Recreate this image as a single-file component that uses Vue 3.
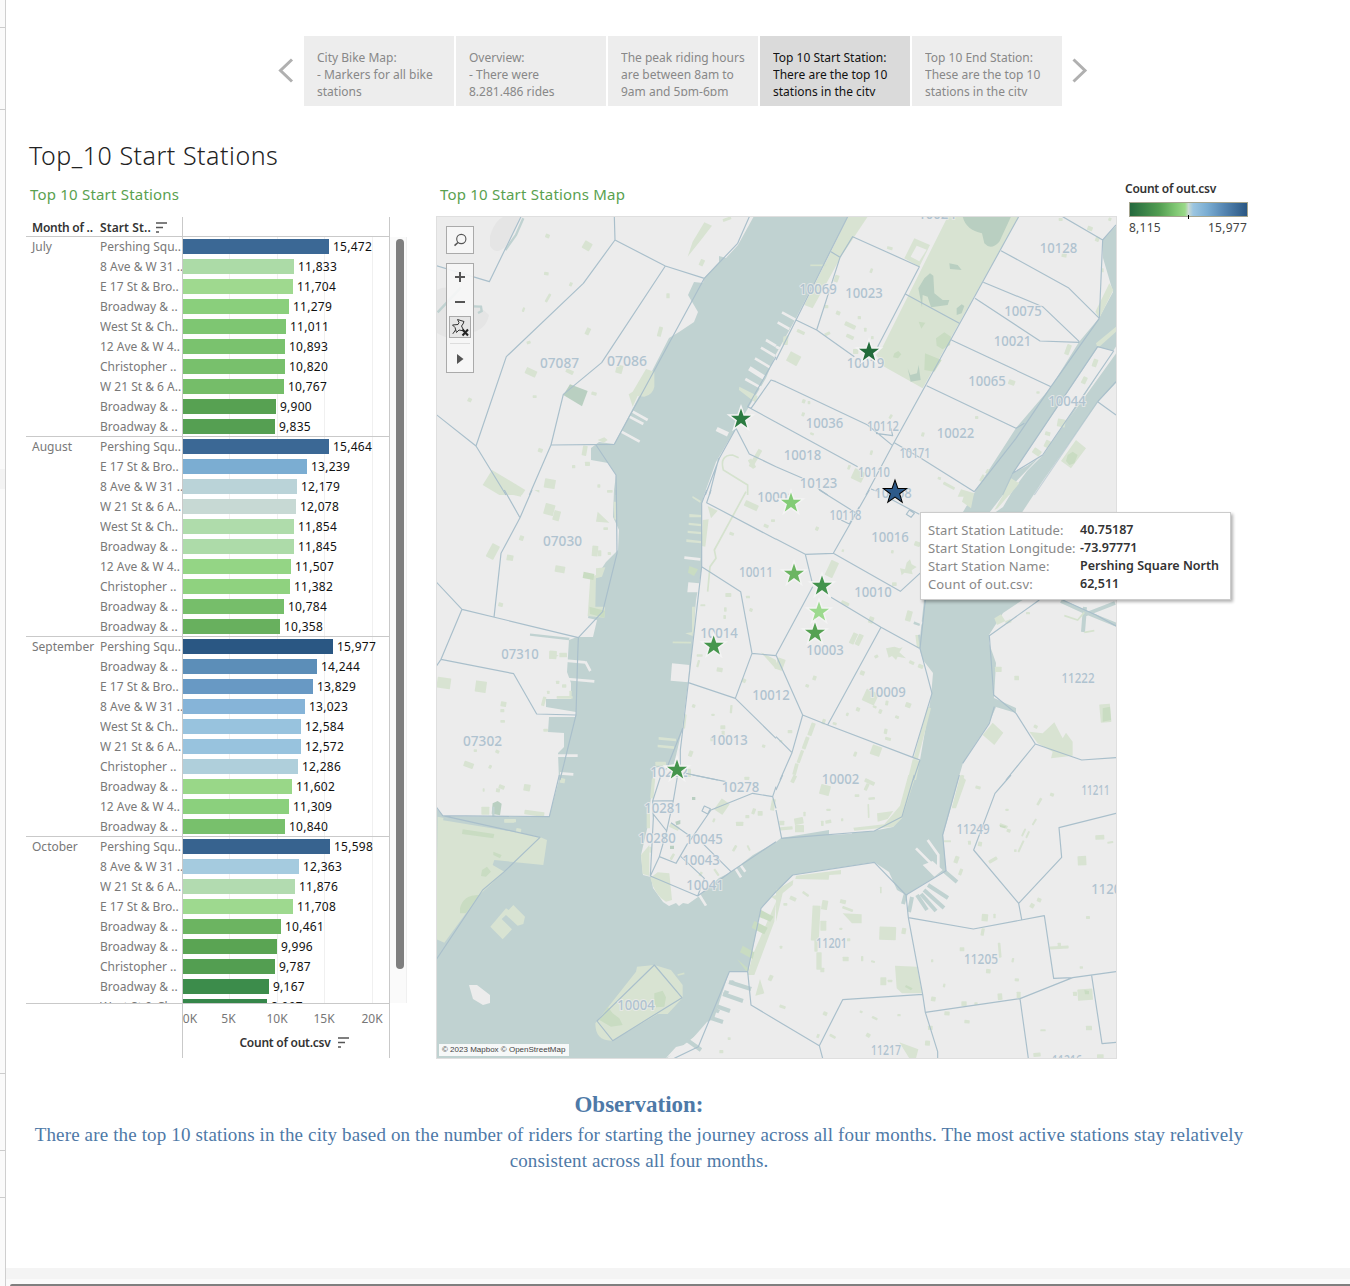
<script setup>
const stories = [
  ['City Bike Map:', '- Markers for all bike', 'stations'],
  ['Overview:', '- There were', '8.281.486 rides'],
  ['The peak riding hours', 'are between 8am to', '9am and 5pm-6pm'],
  ['Top 10 Start Station:', 'There are the top 10', 'stations in the city'],
  ['Top 10 End Station:', 'These are the top 10', 'stations in the city'],
]
const activeStory = 3

const P = 'Pershing Squ..', A8 = '8 Ave & W 31 ..', E17 = 'E 17 St & Bro..', B = 'Broadway & ..'
const WS = 'West St & Ch..', A12 = '12 Ave & W 4..', C = 'Christopher ..', W21 = 'W 21 St & 6 A..'
const months = [
  { name: 'July', rows: [[P, 15472, '#3b6895'], [A8, 11833, '#acdba7'], [E17, 11704, '#9fd98f'], [B, 11279, '#8acf7c'], [WS, 11011, '#7ec672'], [A12, 10893, '#7ac26e'], [C, 10820, '#78c06c'], [W21, 10767, '#75bd69'], [B, 9900, '#57a152'], [B, 9835, '#559f52']] },
  { name: 'August', rows: [[P, 15464, '#3b6895'], [E17, 13239, '#7badd2'], [A8, 12179, '#bad3d8'], [W21, 12078, '#c7d9d4'], [WS, 11854, '#afdcab'], [B, 11845, '#addba9'], [A12, 11507, '#94d585'], [C, 11382, '#8fd27f'], [B, 10784, '#76be6a'], [B, 10358, '#68b05e']] },
  { name: 'September', rows: [[P, 15977, '#2a5783'], [B, 14244, '#5c8eb8'], [E17, 13829, '#6899c4'], [A8, 13023, '#86b4d8'], [WS, 12584, '#98c3de'], [W21, 12572, '#98c3de'], [C, 12286, '#afcfdb'], [B, 11602, '#99d788'], [A12, 11309, '#8bd07d'], [B, 10840, '#78c06c']] },
  { name: 'October', rows: [[P, 15598, '#37638f'], [A8, 12363, '#a5cbdf'], [W21, 11876, '#b2dbb0'], [E17, 11708, '#9ed98f'], [B, 10461, '#6cb461'], [B, 9996, '#5aa453'], [C, 9787, '#539e51'], [B, 9167, '#3c8c4b'], [WS, 8997, '#35864a']] },
]
const barWidth = v => Math.floor(v * 0.0095 + 0.215) - 1

const tips = [
  ['Start Station Latitude:', '40.75187'],
  ['Start Station Longitude:', '-73.97771'],
  ['Start Station Name:', 'Pershing Square North'],
  ['Count of out.csv:', '62,511'],
]

// Map sections: each holds its own origin and is drawn at three units per pixel.
const tiles = [
  { x: 436, y: 215,
    lines: 'M255,5L160,200L0,152M535,5L537,75L442,205L211,425L120,693L0,598M120,693L210,840M537,75L688,153L805,190M688,153L497,443L382,538L345,690L535,688M345,690L280,840M940,5L905,85L805,190L535,688M480,690L540,780L541,840M1020,425L935,575L945,580L1005,495L1020,500M935,575L1020,622M900,640L940,717L1020,755M900,640L850,730L808,840M848,730L820,840',
    piers: 'M990,375l30,18M975,398l42,25M957,430l50,30M928,492l50,28M590,590l45,25M580,605l42,22M556,650l55,30', wide: 'M940,460l45,28M842,642l34,16',
    parks: [[328, 57, 13, 12, 20], [441, 80, 25, 25, 30], [324, 171, 14, 10, 8], [400, 202, 9, 12, 25], [332, 235, 8, 28, 30], [259, 277, 7, 14, 20], [272, 378, 12, 9, -20], [449, 338, 13, 22, 25], [691, 235, 10, 15, 0], [666, 335, 12, 30, 15], [268, 462, 34, 20, 25], [389, 464, 24, 12, 25], [540, 450, 20, 25, 15], [466, 531, 16, 10, 15], [95, 549, 12, 12, 25], [290, 541, 12, 8, 0], [306, 700, 14, 12, 20], [439, 692, 14, 30, 10], [447, 740, 15, 13, 0], [408, 750, 10, 10, 0], [325, 792, 33, 28, 10], [484, 808, 9, 10, 0], [513, 825, 17, 8, 0], [791, 133, 13, 20, 25], [860, 8, 26, 9, -20], [952, 700, 13, 60, 30], [933, 740, 30, 12, 60]],
    greens: 'M805,22L828,32L795,75L755,125L770,80ZM630,462L655,470L655,515Q650,540 625,545L605,543L590,575L578,538L590,530ZM168,765L268,825L258,840L190,840L140,810ZM910,515l55,28-6,20-50,-38ZM485,675l20,-8 10,8-12,8Z',
    darks: 'M402,508L455,528L438,574L382,540Z', routes: 'M935,840V810L862,765Q850,720 890,720L908,728', creek: 'M262,10L240,60L208,105M5,292L75,217M112,274L135,275L137,288L126,294' },
  { x: 776, y: 215,
    lines: 'M215,5L60,315L0,435M165,110L192,127L230,65L430,155L305,395M192,127L122,345M60,315L122,345L235,425M388,237L550,325M728,5L350,690L270,840M860,5L980,75L970,310M980,75L1020,30M675,107L877,218L970,310M622,202L800,275L910,380M597,250L792,378L910,382M526,375L825,515M452,512L720,640L745,625M0,500L275,630L350,692M0,622L245,755M0,755L80,790M125,820L155,840M355,683L435,730L595,830M970,310L825,515L720,670L595,830M965,395L1013,408L800,720L710,775ZM965,560L1020,600M965,560L1020,500M285,822L310,832M300,655L350,662L345,640',
    piers: 'M18,292l40,22M5,322l35,20M0,395l22,10', minor: 'M710,775L680,840M965,560L775,840',
    parks: [[333, 95, 17, 9, 15], [282, 160, 8, 14, 20], [175, 180, 13, 22, 20], [180, 288, 13, 12, 20], [145, 270, 12, 10, 0], [62, 346, 25, 10, 25], [205, 325, 35, 13, 25], [210, 360, 24, 11, 25], [145, 352, 18, 9, -25], [35, 415, 36, 32, 28], [245, 303, 10, 10, 0], [264, 338, 8, 12, 0], [285, 363, 8, 10, 0], [231, 402, 16, 15, 0], [78, 553, 10, 12, 20], [95, 558, 8, 10, 0], [77, 592, 9, 12, 20], [102, 653, 12, 7, 20], [340, 598, 8, 14, 30], [436, 652, 9, 13, 15], [282, 706, 8, 14, 15], [597, 603, 10, 9, 0], [485, 786, 10, 8, 15], [500, 808, 38, 9, 28], [934, 34, 16, 13, 20], [848, 9, 12, 9, 0], [857, 115, 15, 12, 10], [958, 65, 12, 15, 20], [697, 495, 20, 15, 20], [781, 529, 10, 7, 0], [869, 388, 14, 32, 20], [807, 650, 16, 12, 15], [806, 676, 16, 22, 25], [770, 702, 25, 18, 35], [844, 612, 24, 24, 10], [918, 485, 14, 22, 25], [950, 432, 14, 24, 20], [975, 160, 8, 12, 0], [997, 8, 9, 10, 20], [229, 765, 35, 33, 25], [215, 750, 8, 14, 20], [645, 117, 14, 12, 30], [614, 778, 8, 22, 30], [630, 762, 7, 14, 30]],
    greens: 'M215,5L275,5L195,125L110,280L85,270L165,110ZM515,5H728L440,520L325,455L300,420L320,395ZM415,70L462,90L430,155L385,130ZM1000,205L1012,225L970,310L958,290ZM900,675L930,700L885,760L855,738ZM1020,335L1020,350L965,400L960,385ZM555,823l40,12-5,10H545ZM705,790L730,805L700,840H680ZM22,365L38,360L35,390L20,390Z',
    darks: 'M560,5H705L670,80Q645,108 625,85L618,55Q570,45 560,5ZM462,175L472,182L475,235L500,255L520,255L515,270L465,277L455,245L440,240L438,277L427,220L445,190ZM520,145l25,5 12,15-35,-3ZM542,280l15,-12 8,5-8,22-15,5ZM395,460l8,20 20,-5 5,-25 6,45-30,5Z',
    mids: 'M480,370L505,352L525,365L522,390L500,403L482,392ZM447,415L497,435L475,470L445,465ZM355,415l12,-7 9,10-10,12-15,-3ZM428,320l20,3-12,18ZM875,720l15,-10 15,10-10,25-15,5-10,-12Z', holes: 'M422,92l30,12-22,35-26,-14Z', routes: 'M103,151H152' },
  { x: 436, y: 490,
    lines: 'M205,0L252,83L288,0M252,83L195,190L174,382M0,275L78,358L427,443L500,365L543,190L541,0M78,358L15,508L0,530M15,508L233,551L302,672L420,675M427,443L425,500L420,675L372,870M825,0L812,38L1020,148M812,0L797,40V230L914,305L948,490L898,625L757,578M898,625L1020,745M948,490L1020,497M797,230L757,578L733,780V840M740,715L690,840M750,850L845,870',
    piers: 'M745,203L793,208M390,512l58,5M448,515l15,28M393,567L475,574M365,797h60M372,850l40,3',
    parks: [[325, 42, 30, 33, 15], [352, 62, 20, 30, 15], [250, 137, 13, 15, 20], [158, 162, 25, 45, 28], [212, 195, 20, 17, 10], [357, 228, 30, 20, 10], [468, 167, 18, 32, 5], [486, 181, 10, 18, 0], [187, 338, 14, 12, 15], [340, 482, 22, 25, 5], [370, 488, 23, 14, 0], [3, 563, 41, 32, 8], [118, 573, 33, 34, 8], [194, 635, 17, 15, 10], [193, 657, 12, 10, 0], [193, 690, 14, 8, 0], [83, 816, 30, 17, 20], [113, 778, 10, 8, 0], [178, 780, 12, 10, 25], [158, 825, 9, 11, 25], [322, 716, 14, 9, 0], [360, 572, 10, 10, 0], [378, 583, 13, 10, 0], [333, 602, 8, 10, 0], [318, 620, 10, 28, 15], [362, 618, 48, 8, 0], [400, 602, 7, 20, 0], [502, 112, 14, 8, 0], [515, 186, 10, 9, 0], [925, 38, 42, 18, 25], [983, 103, 15, 10, 25], [1005, 88, 12, 8, 0], [880, 127, 14, 9, 20], [868, 309, 18, 12, 0], [864, 352, 8, 13, 0], [862, 375, 8, 12, 0], [940, 355, 10, 10, 20], [930, 317, 12, 8, 0], [793, 343, 15, 6, 0], [842, 533, 18, 13, 10], [782, 493, 18, 7, 0], [783, 510, 7, 22, 15], [882, 645, 7, 25, 5], [768, 643, 10, 10, 20], [826, 671, 10, 7, 0], [853, 706, 15, 12, 0], [857, 722, 9, 14, 0], [823, 742, 9, 12, 0], [978, 764, 10, 9, 20], [758, 782, 12, 18, 20], [918, 566, 12, 12, 25], [755, 836, 10, 25, 0], [658, 815, 32, 12, 0], [925, 860, 15, 10, 0]],
    greens: 'M485,65L520,98L480,95ZM815,48L845,62L825,85ZM800,90L818,88L808,170L797,168ZM463,260L480,255L478,350H507L505,383L455,378ZM480,235l28,-3-10,28-18,5ZM975,487L1020,510V538ZM760,72L797,75V82H760ZM758,98l38,4v7l-38,-4ZM755,122l42,4v7l-42,-4ZM751,148l44,5v7l-44,-4ZM770,18l25,15-3,5-23,-15ZM533,35h10v55l-8,-2ZM748,430l22,-4v12ZM768,350h9l-3,80h-6ZM745,672l7,2-5,42-8,-2ZM168,0H260L255,20ZM295,0h15v8ZM668,741l52,5v8l-52,-5ZM665,764l50,5v8l-50,-5ZM340,482l28,15-28,10Z',
    mids: 'M443,245L475,252L472,270L440,264ZM460,350L507,362L505,383L462,372ZM760,228l26,10-12,20-18,-10Z',
    holes: 'M757,277L790,280V307H754ZM708,520L760,525L757,577L704,572Z', routes: 'M930,5L835,180L840,205L822,230L815,305M710,457L765,458', creek: 'M282,434L400,447' },
  { x: 776, y: 490,
    lines: 'M130,0L245,72M280,0L172,190L88,193L0,147M88,193L108,275M172,190L373,304L435,247M110,290L0,495M165,322L315,412L430,475M315,412L155,705M0,495L80,675L155,705L410,802L432,810M80,675L48,788L12,870M48,788L0,740M410,802L468,610L432,475L448,330M790,330L640,437L653,615L720,670L778,762L917,810L1020,803M778,762L690,870M655,650L640,700L560,820M195,90L220,102L250,50M340,25L430,73M400,60l15,10-10,12-14,-9ZM432,810L412,870M860,330L960,375L1020,408', piers: 'M415,390l24,10',
    parks: [[118, 110, 10, 12, 25], [155, 212, 25, 50, 25], [197, 178, 7, 8, 20], [345, 180, 8, 10, 10], [415, 155, 18, 14, 20], [348, 277, 14, 11, 0], [195, 335, 25, 10, 25], [278, 380, 15, 20, 20], [390, 362, 17, 32, 15], [225, 428, 15, 35, 25], [242, 432, 15, 35, 25], [0, 505, 24, 35, 20], [110, 557, 11, 14, 20], [252, 542, 14, 14, 20], [88, 583, 11, 9, 20], [295, 495, 12, 9, -25], [399, 513, 16, 10, 25], [426, 523, 16, 12, 20], [263, 602, 40, 38, 25], [240, 652, 12, 12, 20], [308, 658, 10, 13, 20], [210, 668, 8, 10, 20], [290, 647, 12, 7, 20], [357, 677, 12, 9, 20], [388, 638, 17, 15, 20], [328, 632, 9, 14, 10], [324, 716, 10, 16, 10], [327, 742, 18, 9, 15], [285, 767, 30, 30, 20], [233, 785, 9, 15, 20], [35, 720, 14, 10, 0], [170, 697, 12, 8, 20], [138, 687, 10, 16, 20], [100, 698, 13, 40, 20], [83, 740, 12, 38, 20], [68, 780, 10, 40, 20], [53, 820, 11, 35, 15], [715, 557, 14, 14, 0], [657, 530, 20, 16, 0], [750, 366, 12, 7, 0], [688, 390, 18, 10, -20], [773, 705, 12, 10, 25], [972, 642, 32, 55, -5], [10, 750, 9, 7, 0], [553, 855, 10, 16, 20]],
    greens: 'M372,235l15,3 5,-20 10,-10 5,15 15,8-15,10 3,12-25,-5-8,8ZM655,60L690,0H712L665,55ZM558,35l10,-30 25,10-8,40ZM650,698L682,728L655,765L620,735ZM760,725L800,730L835,697L860,745L870,728L890,755V797L825,805L830,785L785,760ZM455,650L465,655L425,810L412,808ZM410,808L432,812L420,870H395ZM655,385l20,-12 13,20-25,12ZM418,435l8,0 5,35-8,5ZM330,475l25,-5 15,5 10,-3-10,15 20,18-25,-5-5,10-12,-12-10,5Z',
    mids: 'M980,655l22,-5 3,40-25,5Z', routes: 'M865,377L905,390L925,367M925,427L955,422' },
  { x: 436, y: 775,
    lines: 'M0,95L20,122L340,125L370,0M20,122L312,187L205,290L140,345L0,555M725,0L712,77L650,78L675,0M650,78L652,130L643,303L785,363L885,290L1020,200M650,115L692,168L712,77M692,168L670,245L720,265L755,205M705,143L765,185M643,303L670,245M735,245L805,310L785,363M800,205L885,290M760,200L825,105L950,55L1010,65L1020,100M1010,65L1020,35M805,93l18,8-8,16-17,-9ZM770,0L870,20M1020,350L975,400L935,590L880,590L787,815L715,850M935,590L945,690L1020,735M655,570L738,668L530,797L483,738Z',
    piers: 'M895,275l20,32M910,265l18,25M790,360l20,32',
    parks: [[180, 40, 12, 12, 10], [188, 30, 18, 12, 20], [263, 28, 20, 20, 10], [136, 95, 24, 24, 0], [265, 108, 60, 14, 8], [205, 132, 35, 10, 0], [140, 40, 6, 10, 0], [240, 160, 15, 16, 10], [372, 10, 15, 14, 10], [843, 75, 30, 40, 35], [1005, 72, 12, 35, 10], [900, 140, 22, 13, 0], [948, 100, 10, 18, 20], [965, 108, 15, 14, 0], [928, 120, 12, 10, 0], [830, 130, 7, 12, 20], [892, 210, 8, 20, 30], [935, 210, 6, 18, -25], [790, 290, 8, 14, 30], [838, 280, 7, 24, -35], [705, 235, 8, 20, 30], [700, 150, 30, 12, 25], [645, 10, 10, 60, 5], [632, 100, 10, 60, 0], [640, 215, 8, 18, 0], [850, 825, 12, 10, 0], [875, 787, 9, 8, 0], [998, 600, 12, 18, 25]],
    greens: 'M5,125L310,185L333,195L322,270L175,255L170,270L205,290L130,360L25,503L0,492ZM163,455L210,400L218,405L232,390L267,425L262,447L245,452L210,420L197,432L228,463L200,493ZM603,575L655,570L705,585L740,630V668L695,717H665L530,797Q478,800 478,745L600,590ZM643,308L665,292L700,295L708,375L690,380Q655,360 643,308ZM615,240L640,210V303L620,297ZM972,612L985,655L958,662ZM1020,360V375L1005,365ZM1020,380L1015,440L955,600H935L950,540ZM205,133h30v10h-30Z',
    mids: 'M80,163L175,177L172,190L78,177ZM72,400Q80,360 130,360L90,415H72ZM138,285l15,-10 12,15-15,15-15,-2ZM172,230l25,10-5,10-20,-10ZM655,655l25,-8 10,20-5,28-25,2-5,-20ZM975,405l38,20-10,15-35,-15ZM955,438l40,20-10,20-38,-20ZM920,512l35,20-5,20-38,-20ZM903,552l35,30-3,12ZM490,735l25,-40 15,20 20,15 10,20-35,5Z',
    darks: 'M170,85l15,-7 12,8-5,35-25,-5ZM718,140l15,-5v12l-12,4ZM702,212h12v10h-12ZM768,66h10v9h-10Z',
    routes: 'M725,600L745,595', creek: 'M22,132L240,168M172,95V125L205,130' },
  { x: 776, y: 775,
    lines: 'M0,45L20,0M0,105L17,190L295,168L378,125L415,0M50,300L295,262L390,360L510,287L500,180L550,0M50,300L0,350M390,360L397,428L440,658L448,712L485,830V850M397,428L592,462L805,422L833,610L890,608L1020,590M705,0L657,55L593,225L728,385L737,433M728,385L857,247L849,158L1020,115M448,712L732,671L890,608M732,671L757,850M947,602L978,806L1020,802M440,658L200,674L130,812L0,735M130,812L140,850',
    piers: 'M455,195L487,240V280M420,220L465,265',
    parks: [[132, 30, 30, 30, 15], [47, 0, 12, 24, 25], [265, 15, 32, 12, 25], [267, 25, 10, 22, 25], [275, 87, 5, 42, -2], [236, 58, 14, 8, 0], [277, 67, 20, 7, -5], [82, 110, 7, 14, 0], [10, 137, 15, 14, 0], [55, 128, 27, 20, -10], [57, 150, 27, 22, 0], [135, 137, 8, 16, 0], [148, 135, 18, 10, -10], [195, 130, 7, 9, 0], [10, 155, 40, 10, -5], [151, 101, 13, 7, 0], [598, 33, 16, 9, 15], [688, 101, 10, 7, 0], [670, 148, 25, 10, 20], [692, 162, 12, 10, 20], [786, 68, 8, 24, 30], [822, 54, 12, 10, 20], [772, 130, 6, 22, 30], [740, 160, 6, 25, 25], [752, 168, 6, 22, 25], [732, 195, 6, 38, 25], [714, 223, 8, 8, 0], [606, 200, 12, 14, 10], [576, 197, 9, 12, 0], [503, 196, 22, 6, 0], [535, 243, 13, 22, 20], [549, 281, 10, 20, 20], [637, 250, 28, 10, -30], [958, 180, 27, 14, -3], [994, 199, 18, 6, -10], [905, 243, 26, 28, -3], [762, 385, 13, 14, 30], [783, 369, 13, 12, 20], [930, 423, 12, 9, 0], [617, 417, 19, 22, 5], [652, 416, 7, 14, 0], [615, 460, 10, 22, 10], [551, 517, 14, 12, 0], [667, 503, 8, 45, -5], [707, 549, 7, 13, 10], [465, 553, 7, 9, 0], [630, 582, 14, 13, 5], [716, 610, 13, 9, 5], [501, 626, 7, 11, 10], [665, 655, 14, 20, -5], [722, 650, 12, 20, 0], [465, 665, 14, 14, 10], [556, 679, 16, 14, 0], [595, 682, 10, 8, 0], [505, 709, 16, 12, 5], [565, 735, 16, 10, 5], [447, 797, 15, 15, 5], [456, 752, 14, 13, 0], [930, 752, 18, 14, 0], [793, 763, 16, 6, 0], [772, 833, 22, 12, -5], [963, 838, 20, 12, 0], [911, 574, 10, 7, 0], [905, 642, 45, 34, -4], [891, 650, 12, 13, 0], [821, 513, 57, 9, -3], [845, 503, 10, 12, 0], [137, 376, 18, 28, 10], [133, 437, 18, 30, 0], [41, 365, 20, 12, 25], [78, 353, 22, 8, 35], [22, 384, 12, 8, 0], [11, 512, 8, 9, 0], [190, 458, 9, 7, 0], [192, 374, 18, 12, 15], [198, 398, 34, 8, 20], [310, 455, 50, 40, 2], [377, 459, 13, 18, 10], [312, 335, 5, 20, 0], [107, 392, 24, 105, 3], [121, 532, 16, 52, 0], [115, 495, 10, 35, 0], [200, 545, 18, 14, 0], [255, 543, 7, 16, 0], [285, 557, 12, 6, 15], [313, 607, 18, 24, 0], [335, 614, 14, 8, 0], [133, 578, 12, 14, 0], [213, 490, 10, 9, 0], [10, 691, 19, 9, 20], [141, 710, 13, 12, 25], [251, 707, 9, 7, 20], [287, 726, 18, 7, 25], [160, 780, 20, 8, 30], [270, 775, 13, 12, 30], [122, 777, 8, 12, 20], [364, 717, 10, 7, 0]],
    greens: 'M397,0H420L378,130L352,155L235,167L232,158L325,148L372,92ZM303,115L352,108L335,132L305,140ZM553,0L570,15L540,100H527ZM200,415L257,418V445H228ZM357,572L423,575L438,655L378,655L362,640ZM370,802L427,823L420,850H400ZM0,345L52,315L50,330L20,355L0,440ZM60,302L195,285V298L160,300L158,314L58,312Z',
    mids: 'M390,630l20,10-5,6-18,-10ZM925,645l14,3v10h-12ZM672,150l18,4-3,6-15,-4Z',
    holes: 'M440,270L470,258L500,285L475,305ZM162,165L228,160V176L160,180Z' },
]

const labels = [
  ['07087', 559.5, 368], ['07086', 627, 366], ['10128', 1058.5, 253], ['10069', 818, 294], ['10023', 864, 298], ['10075', 1023, 315.5],
  ['10021', 1012.5, 346], ['10019', 865.5, 368], ['10065', 987, 386], ['10044', 1067, 406], ['10036', 824.5, 428], ['10112', 883, 431],
  ['10022', 955.5, 438], ['10171', 915, 458], ['10018', 802.5, 460], ['10110', 874, 476.5], ['10123', 818.5, 488], ['10168', 893, 498],
  ['10001', 776, 502], ['10118', 845.5, 520], ['10016', 890, 542], ['07030', 562.5, 546], ['10011', 756, 577], ['10010', 873, 597],
  ['10014', 719, 638], ['10003', 825, 655], ['07310', 520, 659], ['10012', 771, 700], ['10009', 887, 697], ['11222', 1078, 683],
  ['07302', 482.5, 745.5], ['10013', 729, 744.5], ['10282', 669, 777], ['10002', 840.5, 784], ['11211', 1095.5, 795], ['10278', 740.5, 792],
  ['10281', 663, 813], ['10280', 657, 843], ['10045', 704, 843.5], ['10043', 701, 865], ['10041', 705, 890], ['11249', 973, 834],
  ['11206', 1110, 894], ['11201', 831.5, 948], ['11205', 981, 964], ['10004', 636, 1010], ['11217', 886, 1055], ['11216', 1067, 1064.5], ['10024', 937, 218.5],
]
const narrow = { 11222: 33, 11211: 28, 11249: 33, 11201: 31, 11205: 34, 11217: 30, 11216: 30, 10171: 31, 10110: 32, 10112: 32, 10118: 32, 10011: 34, '07087': 39, '07086': 40, '07030': 39, '07302': 39 }

const star = 'M0,-10.5L2.5,-3.3L10,-3.2L4,1.3L6.2,8.5L0,4.1L-6.2,8.5L-4,1.3L-10,-3.2L-2.5,-3.3Z'
const stars = [
  [869, 352, '#226b3a'], [741, 419, '#2b7b41'], [791, 503, '#83cc76'], [794, 574, '#6cb562'], [822, 586, '#43934d'],
  [819, 612, '#9cd98e'], [815, 633, '#55a152'], [713.7, 646, '#46964d'], [677, 770, '#45954d'],
]
</script>

<template>
  <div class="page">
    <aside class="strip"><i class="t1"></i><i class="t2"></i><i class="blk"></i><i class="t3"></i><i class="t4"></i><i class="t5"></i></aside>
    <main>
      <nav class="stories">
        <svg class="arrow" width="16" height="26" viewBox="0 0 16 26"><path d="M14 1.5L2.5 12.5L14 23.5" /></svg>
        <div class="cards">
          <div v-for="(s, i) in stories" :key="i" class="card" :class="{ active: i === activeStory }">
            <div class="clip"><div v-for="l in s" :key="l">{{ l }}</div></div>
          </div>
        </div>
        <svg class="arrow" width="16" height="26" viewBox="0 0 16 26"><path d="M1.5 1.5L13 12.5L1.5 23.5" /></svg>
      </nav>
      <h1>Top_10 Start Stations</h1>
      <div class="dash">
        <section class="chart">
          <h2>Top 10 Start Stations</h2>
          <div class="head">
            <b class="hm">Month of ..</b><b class="hs">Start St..</b>
            <svg width="11" height="11" viewBox="0 0 11 11"><path d="M0 1H11M0 5.5H7M0 10H3" /></svg>
            <div class="hplot"></div>
          </div>
          <div class="scroller">
            <div class="rows">
              <div v-for="m in months" :key="m.name" class="month">
                <div class="mname">{{ m.name }}</div>
                <div class="mrows">
                  <div v-for="(r, i) in m.rows" :key="i" class="row">
                    <div class="station">{{ r[0] }}</div>
                    <div class="plot">
                      <div class="bar" :style="{ width: barWidth(r[1]) + 'px', background: r[2] }"></div>
                      <span class="val">{{ r[1].toLocaleString('en-US') }}</span>
                    </div>
                  </div>
                </div>
              </div>
            </div>
            <div class="track"><div class="thumb"></div></div>
          </div>
          <div class="foot">
            <div class="axis">
              <div class="ticks"><span>0K</span><span>5K</span><span>10K</span><span>15K</span><span>20K</span></div>
              <div class="atitle"><b>Count of out.csv</b><svg width="11" height="11" viewBox="0 0 11 11"><path d="M0 1H11M0 5.5H7M0 10H3" /></svg></div>
            </div>
          </div>
        </section>

        <section class="mapcol">
          <h2>Top 10 Start Stations Map</h2>
          <div class="map">
            <svg class="canvas" width="679" height="841" viewBox="437 217 679 841">
              <rect x="437" y="217" width="679" height="841" fill="#ececec" />
              <g class="shade">
                <path d="M490,236Q495,220 503,217H520L506,246Q496,256 490,246Z" />
                <path d="M437,290Q452,282 462,300Q480,305 489,315Q486,330 470,333Q452,343 437,333Z" />
              </g>
              <path class="water" d="M847.7,216L831,250L795,320L776,354L766,378L750,405L738,425L727.7,442L716,462L704,495L702,503V567L696,600L692,650L688,682L682,730L674,764L654,768L648,825L641,855L643,875L651,877L653,888L663,902L669,906L676,903L679,906L683,903L688,904L698,897L719,878L731,872L753,855L776,842L781,838L829,830V835L873,831L893,827L902,817L914,775L920,760L931,697L933,673L923,660L919,647L924,600L928,570L963,512L976,490L1016,428L1051,387L1079,342L1099,318L1113,292L1103,258V240L1117,225V345L1056,440L1003,495L976,530L1026,520L1039,590L1021,601L1003,613L989,635V643L996,663L994,698L1016,708V713L996,707L989,723L973,747L963,763L958,780L951,807L943,835L946,870L906,895L897,890L889,872L874,862L793,875L776,892L761,908L748,972H729L713,1022L666,1059H436V808L443,816L549,817L559,780L558,753L564,747V733L548,732L549,717H576V712L546,707V699H571V683L567,672L569,640L577,637H593L597,620L588,618L596,577L606,562L618,550L619,530L613,517L614,490L616,475L608,463L591,460V448L599,442L614,444L633,408L669,338L679,332L694,322L698,312L688,295L694,282L703,283L704,278L719,262V256L726,258L738,245L754,216Z" />
              <path class="water" d="M1117,352V382L1098,402L1042,482L1021,514L990,550L970,530L1003,507L1013,490L1027,471L1043,455Z" />
              <path fill="#ececec" d="M1098,347L1114,351L1043,455L1027,466L1013,473Z" />
              <path class="finger" d="M1061,601L1085,612L1117,625M1085,607L1083,632M1084,615L1115,603" />
              <path class="finger" d="M912,897L909,912M917,895L927,910M921,894L936,911M924,890L944,908M928,885L948,898M943,870L957,882M906,893L903,904M731,982l20,7M724,992l20,7M715,1010l13,5M708,1018l14,5" />
              <path class="finger" d="M914,622l6,2M918,635l2,10" />
              <path fill="#ececec" d="M469,985l8,0 13,10v8l-7,2-10,-6ZM736,978l16,6-8,20-20,22-16,8ZM707,1022L733,1010L700,1058H691L697,1042L666,1058L676,1047L684,1045L693,1038Z" />
              <path class="finger" d="M729,982l22,7M723,994l20,7M716,1006l14,5M711,1018l12,4M687,1040l14,10" />
              <g v-for="(t, i) in tiles" :key="'g' + i" :transform="`translate(${t.x} ${t.y}) scale(.33333)`">
                <path class="park" :d="t.greens" />
                <rect v-for="(p, j) in t.parks" :key="j" class="park" :x="p[0]" :y="p[1]" :width="p[2]" :height="p[3]" :transform="`rotate(${p[4]} ${p[0] + p[2] / 2} ${p[1] + p[3] / 2})`" rx="2" />
                <path class="mid" :d="t.mids" />
                <path class="dark" :d="t.darks" />
                <path class="hole" :d="t.holes" />
                <path class="pier" :d="t.piers" />
                <path class="pier wide" :d="t.wide" />
                <path class="route" :d="t.routes" />
                <path class="creek" :d="t.creek" />
              </g>
              <g v-for="(t, i) in tiles" :key="'l' + i" :transform="`translate(${t.x} ${t.y}) scale(.33333)`">
                <path class="zip" :d="t.lines" /><path class="zip faint" :d="t.minor" />
              </g>
              <text v-for="l in labels" :key="l[0]" class="zl" :x="l[1]" :y="l[2]" :textLength="narrow[l[0]] || 37.5" lengthAdjust="spacingAndGlyphs">{{ l[0] }}</text>
              <path v-for="(s, i) in stars" :key="'s' + i" class="star" :d="star" :transform="`translate(${s[0]} ${s[1]})`" :fill="s[2]" />
              <path :d="star" transform="translate(895 492.3) scale(1.16)" fill="#2d5a8a" stroke="#000" stroke-width=".9" />
            </svg>
            <div class="tools">
              <div class="box search"><svg width="26" height="26" viewBox="0 0 26 26"><circle cx="14.3" cy="12" r="4.6" fill="none" stroke="#555" stroke-width="1.1" /><path d="M11 15.5L7.5 18.6" stroke="#555" stroke-width="1.6" /></svg></div>
              <div class="box bar4">
                <svg width="26" height="108" viewBox="0 0 26 108">
                  <path d="M8 13H18M13 8V18M8 38H18" stroke="#555" stroke-width="2" />
                  <rect x="2.5" y="52.5" width="21" height="21" fill="#e6e6e6" stroke="#aaa" />
                  <path d="M10.5 55.5L17 57.5L16 60L14.5 62L17 67L12 66L9.5 68.5L8 63.5L5.5 61L11 60.5L12 58.5ZM8.5 66L5.8 69.8" fill="none" stroke="#333" stroke-width="1" />
                  <path d="M15.5 65.5L21 71.5M21 65.5L15.5 71.5" stroke="#222" stroke-width="2" />
                  <path d="M3 79.5H23" stroke="#ddd" /><path d="M10 90L16.5 95L10 100Z" fill="#555" />
                </svg>
              </div>
            </div>
            <div class="credit">© 2023 Mapbox © OpenStreetMap</div>
            <div class="tip">
              <div v-for="t in tips" :key="t[0]" class="tr"><span>{{ t[0] }}</span><b>{{ t[1] }}</b></div>
            </div>
          </div>
        </section>

        <section class="legend">
          <b>Count of out.csv</b>
          <div class="ramp"><i></i></div>
          <div class="ends"><span>8,115</span><span>15,977</span></div>
        </section>
      </div>
      <section class="obs">
        <h3>Observation:</h3>
        <p>There are the top 10 stations in the city based on the number of riders for starting the journey across all four months. The most active stations stay relatively</p>
        <p>consistent across all four months.</p>
      </section>
      <footer><div class="hbar"></div></footer>
    </main>
  </div>
</template>

<style>
body { margin: 0; overflow: hidden; background: #fff; }
</style>
<style scoped>
.page { display: flex; width: 1350px; height: 1286px; overflow: hidden; font-family: "Noto Sans", "Open Sans", sans-serif; font-size: 12px; color: #333; }
.strip { width: 5px; border-right: 1px solid #cfcfcf; background: #fafafa; display: flex; flex-direction: column; flex: none; }
.strip i { height: 1px; background: #ccc; flex: none; }
.strip .t1 { margin-top: 27px; }
.strip .t2 { margin-top: 81px; }
.strip .blk { margin-top: 359px; height: 20px; background: #f3f3f3; }
.strip .t3 { margin-top: 584px; }
.strip .t4 { margin-top: 76px; }
.strip .t5 { margin-top: 46px; }
main { flex: 1; display: flex; flex-direction: column; min-width: 0; }
.stories { display: flex; align-items: center; margin: 36px 0 0 272px; gap: 10px; height: 70px; }
.arrow { margin-top: -1px; }
.arrow path { fill: none; stroke: #b0b0b0; stroke-width: 3; }
.cards { display: flex; gap: 2px; }
.card { width: 137px; height: 70px; padding-left: 13px; background: #ededed; color: #888; line-height: 17px; }
.card.active { background: #dadada; color: #111; }
.clip { margin-top: 13px; height: 47px; overflow: hidden; white-space: nowrap; }
h1 { margin: 32px 0 0 23px; font-size: 25px; line-height: 34px; height: 34px; font-weight: 300; letter-spacing: .52px; color: #222; white-space: nowrap; }
.dash { display: flex; margin-top: 10px; height: 877px; }
h2 { margin: 0 0 0 4px; height: 34px; line-height: 24px; font-size: 15px; letter-spacing: .2px; font-weight: 400; color: #59a14f; white-space: nowrap; }
b { font-weight: 600; letter-spacing: -.25px; }
.chart { width: 381px; margin-left: 20px; }
.head { display: flex; height: 20px; width: 364px; margin-top: 1px; border-bottom: 1px solid #c9c9c9; align-items: stretch; line-height: 21px; white-space: nowrap; box-sizing: border-box; }
.hm { width: 68px; padding-left: 6px; }
.hs { width: 56px; letter-spacing: .1px; }
.head svg { margin-top: 5px; width: 11px; flex: none; }
.head svg path, .atitle path { stroke: #555; stroke-width: 1.6; }
.hplot { width: 206px; margin-left: auto; border-left: 1px solid #c9c9c9; border-right: 1px solid #c9c9c9; }
.scroller { display: flex; height: 766px; }
.rows { width: 364px; height: 766px; overflow: hidden; }
.month { display: flex; height: 200px; box-sizing: border-box; border-bottom: 1px solid #c9c9c9; }
.mname { width: 68px; padding-left: 6px; line-height: 19px; color: #787878; flex: none; white-space: nowrap; }
.mrows { flex: 1; height: 199px; overflow: hidden; }
.row { display: flex; height: 20px; }
.station { width: 82px; line-height: 20px; color: #787878; white-space: nowrap; }
.plot { width: 206px; display: flex; align-items: center; border-left: 1px solid #c9c9c9; border-right: 1px solid #c9c9c9; background: linear-gradient(#f0f0f0, #f0f0f0) 46px 0/1px 100% no-repeat, linear-gradient(#f0f0f0, #f0f0f0) 94px 0/1px 100% no-repeat, linear-gradient(#f0f0f0, #f0f0f0) 141px 0/1px 100% no-repeat, linear-gradient(#f0f0f0, #f0f0f0) 189px 0/1px 100% no-repeat; }
.bar { height: 15px; margin-top: -1px; }
.val { color: #111; margin-left: 4px; line-height: 20px; letter-spacing: .25px; }
.track { width: 17px; background: #fafafa; border-right: 1px solid #f0f0f0; box-sizing: border-box; padding: 2px 0 0 6px; }
.thumb { width: 8px; height: 730px; border-radius: 4px; background: #7f7f7f; }
.foot { width: 364px; border-top: 1px solid #c9c9c9; display: flex; justify-content: flex-end; }
.axis { width: 206px; height: 54px; border-left: 1px solid #c9c9c9; border-right: 1px solid #c9c9c9; }
.ticks { display: grid; grid-template-columns: 22px 55px 42px 52px 44px; margin-left: -4px; padding-top: 5px; line-height: 20px; color: #777; text-align: center; }
.atitle { display: flex; align-items: center; justify-content: center; gap: 7px; padding: 4px 0 0 16px; line-height: 19px; }
.mapcol { margin-left: 29px; width: 681px; }
.map { position: relative; width: 679px; height: 841px; border: 1px solid #dfdfdf; }
.canvas { display: block; }
.shade { fill: #e5e5e5; }
.water { fill: #c0d2d1; }
.finger { fill: none; stroke: #c0d2d1; stroke-width: 4; }
.park { fill: #d8e3d2; }
.mid { fill: #c9dcc2; }
.dark { fill: #b9cfc1; }
.hole { fill: #ececec; }
.pier { fill: none; stroke: #ececec; stroke-width: 8; }
.wide { stroke-width: 14; }
.route { fill: none; stroke: #d5e2ce; stroke-width: 5; }
.creek { fill: none; stroke: #c0d2d1; stroke-width: 7; }
.zip { fill: none; stroke: #a9bfcb; stroke-width: 3.5; stroke-linejoin: round; }
.faint { stroke-opacity: .6; }
.zl { font-size: 13.5px; font-weight: 500; text-anchor: middle; fill: #b0c3d0; stroke: #ececec; stroke-width: 2px; stroke-opacity: .75; paint-order: stroke; }
.star { stroke: #f3f3f3; stroke-width: 3px; paint-order: stroke; }
.tools { position: absolute; left: 9px; top: 9px; }
.box { width: 26px; border: 1px solid #aaa; background: rgba(247, 247, 247, .9); }
.box svg { display: block; }
.search { height: 26px; margin-bottom: 9px; }
.bar4 { height: 108px; }
.credit { position: absolute; left: 2px; bottom: 2px; height: 12px; width: 130px; padding-left: 3px; box-sizing: border-box; background: rgba(255, 255, 255, .85); font: 8px/12px "Liberation Sans", sans-serif; color: #444; white-space: nowrap; }
.tip { position: absolute; left: 483px; top: 295px; width: 302px; height: 78px; padding: 8px 0 0 7px; border: 1px solid #ccc; background: #fff; box-shadow: 2px 2px 3px rgba(0, 0, 0, .3); font-size: 12.5px; line-height: 18px; }
.tr { display: flex; white-space: nowrap; }
.tr span { width: 152px; font-size: 13px; color: #888; letter-spacing: .13px; }
.tr b { letter-spacing: 0; }
.legend { margin-left: 8px; width: 126px; white-space: nowrap; }
.legend b { display: block; line-height: 14px; }
.ramp { margin: 6px 0 0 4px; width: 117px; height: 13px; border: 1px solid #a5a58f; background: linear-gradient(90deg, #24693d, #529d51 25%, #7cc470 38%, #9ad988 47%, #c9d9d2 50%, #9bc5e0 54%, #7aadd2 66%, #5687b3 80%, #2a5783); display: flex; }
.ramp i { width: 1px; height: 4px; margin: 12px 0 0 58px; background: #000; }
.ends { display: flex; justify-content: space-between; padding: 2px 1px 0 4px; width: 118px; line-height: 17px; color: #444; letter-spacing: .25px; }
.obs { margin-top: 30px; width: 1266px; text-align: center; color: #4e79a7; font-family: "Liberation Serif", serif; }
h3 { margin: 0 0 1px; font-size: 23px; line-height: 32px; font-weight: 700; }
p { margin: 0; font-size: 19px; letter-spacing: .145px; line-height: 26px; white-space: nowrap; }
footer { margin-top: auto; height: 11px; background: #f4f4f4; border-bottom: 7px solid #fafafa; position: relative; }
.hbar { position: absolute; left: 4px; right: 0; top: 16px; height: 2px; background: #7f7f7f; border-radius: 3px 0 0 0; }
</style>
